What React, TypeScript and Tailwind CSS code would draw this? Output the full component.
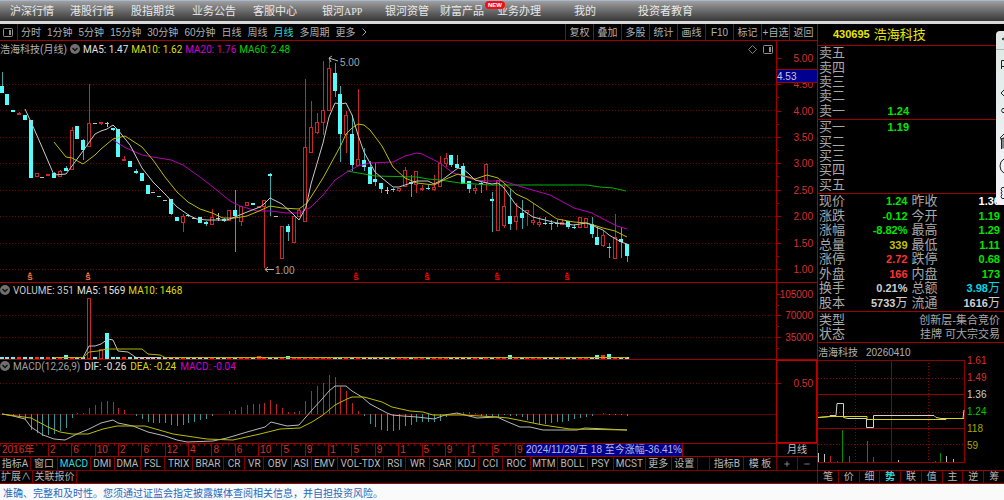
import { Plus, Minus } from "lucide-react";

/* ------------------------------------------------------------------ */
/*  Data                                                               */
/* ------------------------------------------------------------------ */

const CYAN = "#54fcfc";
const RED = "#c82828";
const GRID = "#780000";

const MENU: [string, number][] = [
  ["沪深行情", 60],
  ["港股行情", 61],
  ["股指期货", 61],
  ["业务公告", 61],
  ["客服中心", 69],
  ["银河APP", 63],
  ["银河资管", 55],
  ["财富产品", 57],
  ["业务办理", 77],
  ["我的", 64],
  ["投资者教育", 366],
];

const PERIODS = [
  "分时",
  "1分钟",
  "5分钟",
  "15分钟",
  "30分钟",
  "60分钟",
  "日线",
  "周线",
  "月线",
  "多周期",
  "更多",
];

const TOOLS = ["复权", "叠加", "多股", "统计", "画线", "F10", "标记", "+自选", "返回"];

const INDICATORS: [string, number][] = [
  ["指标A", 31],
  ["窗口", 27],
  ["MACD", 33],
  ["DMI", 24],
  ["DMA", 26],
  ["FSL", 24],
  ["TRIX", 28],
  ["BRAR", 31],
  ["CR", 21],
  ["VR", 19],
  ["OBV", 27],
  ["ASI", 20],
  ["EMV", 26],
  ["VOL-TDX", 47],
  ["RSI", 22],
  ["WR", 23],
  ["SAR", 26],
  ["KDJ", 23],
  ["CCI", 24],
  ["ROC", 28],
  ["MTM", 27],
  ["BOLL", 30],
  ["PSY", 26],
  ["MCST", 32],
  ["更多", 26],
  ["设置", 26],
  ["", 12],
  ["指标B", 34],
  ["模 板", 33],
];

const MONTHS = [2, 6, 10, 2, 6, 12, 4, 8, 6, 10, 5, 9, 1, 5, 9, 1, 5, 9, 1, 5];

// d = falling (filled), u = rising (hollow), w = unchanged
type Kind = "d" | "u" | "w";

// kind, wick top, body top, body bottom, wick bottom
const CANDLES: [Kind, number, number, number, number][] = [
  ["d", 31, 45, 52, 52], ["d", 53, 53, 64, 64], ["d", 69, 69, 71, 71], ["u", 71, 72, 73, 73],
  ["d", 74, 74, 79, 79], ["d", 79, 79, 137, 137], ["u", 132, 132, 135, 135], ["w", 136, 136, 136, 136],
  ["u", 133, 133, 134, 134], ["d", 131, 132, 137, 137], ["u", 129, 130, 135, 136], ["d", 125, 127, 130, 130],
  ["u", 86, 89, 128, 128], ["d", 85, 85, 98, 98], ["d", 98, 99, 109, 119], ["u", 43, 82, 105, 105],
  ["w", 82, 82, 82, 82], ["u", 81, 81, 82, 84], ["w", 81, 82, 82, 86], ["d", 87, 87, 89, 90],
  ["d", 88, 88, 116, 116], ["u", 115, 118, 119, 119], ["d", 120, 120, 126, 126], ["d", 128, 130, 132, 133],
  ["d", 132, 132, 140, 140], ["d", 144, 144, 153, 153], ["w", 151, 151, 151, 151], ["d", 155, 155, 156, 156],
  ["w", 159, 159, 159, 159], ["d", 158, 158, 173, 174], ["d", 176, 176, 180, 180], ["u", 173, 175, 181, 191],
  ["d", 173, 174, 175, 176], ["w", 177, 177, 177, 177], ["d", 176, 176, 182, 182], ["d", 180, 181, 183, 185],
  ["u", 168, 176, 183, 183], ["w", 172, 177, 177, 180], ["d", 177, 178, 180, 181], ["u", 169, 169, 179, 179],
  ["d", 149, 169, 175, 211], ["u", 165, 165, 180, 185], ["u", 161, 161, 164, 165], ["d", 162, 162, 164, 164],
  ["u", 165, 165, 166, 166], ["u", 159, 159, 165, 227], ["d", 132, 133, 135, 175], ["w", 175, 175, 175, 175],
  ["u", 185, 185, 217, 217], ["d", 183, 185, 191, 200], ["u", 175, 175, 201, 201], ["u", 168, 169, 175, 175],
  ["u", 38, 106, 180, 180], ["u", 60, 86, 111, 111], ["u", 72, 81, 91, 93], ["u", 20, 69, 81, 94],
  ["u", 16, 27, 69, 69], ["d", 22, 32, 50, 56], ["d", 45, 53, 93, 121], ["u", 70, 74, 93, 112],
  ["d", 74, 93, 124, 130], ["u", 48, 118, 124, 125], ["d", 107, 119, 126, 130], ["d", 120, 126, 143, 143],
  ["d", 122, 138, 141, 145], ["d", 142, 142, 148, 152], ["w", 146, 149, 149, 153], ["d", 147, 148, 149, 151],
  ["u", 147, 147, 149, 151], ["u", 126, 129, 145, 145], ["d", 134, 141, 143, 156], ["u", 130, 130, 143, 152],
  ["u", 144, 147, 148, 150], ["d", 144, 147, 148, 149], ["u", 134, 146, 148, 150], ["u", 115, 122, 145, 145],
  ["u", 112, 117, 122, 126], ["d", 114, 114, 124, 126], ["d", 114, 123, 127, 127], ["d", 122, 125, 143, 143],
  ["d", 140, 140, 148, 152], ["u", 144, 147, 149, 153], ["d", 141, 142, 143, 152], ["u", 122, 123, 141, 149],
  ["d", 151, 158, 160, 191], ["u", 139, 139, 189, 190], ["u", 143, 165, 184, 187], ["d", 148, 175, 183, 189],
  ["u", 162, 175, 180, 189], ["d", 159, 172, 177, 188], ["u", 169, 169, 171, 185], ["u", 162, 179, 181, 184],
  ["u", 176, 181, 183, 186], ["d", 176, 182, 183, 184], ["d", 179, 182, 183, 189], ["d", 179, 182, 183, 186],
  ["u", 178, 181, 183, 184], ["d", 180, 180, 186, 188], ["d", 183, 186, 187, 188], ["u", 176, 176, 186, 187],
  ["u", 177, 177, 186, 187], ["d", 176, 183, 193, 197], ["d", 186, 196, 204, 204], ["u", 190, 194, 204, 206],
  ["d", 202, 206, 207, 217], ["u", 173, 196, 217, 217], ["d", 186, 198, 201, 217], ["d", 203, 203, 215, 221],
];

const MA_LINES = [
  {
    color: "#00b400",
    points:
      "347,130 364,133 375,135 417,136 428,138 440,139 460,142 490,144 530,144 587,144 600,146 613,147 626,150",
  },
  {
    color: "#b400b4",
    points:
      "113,99 124,106 142,114 153,116 171,119 183,124 200,136 218,150 230,160 240,165 257,170 270,170 287,172 300,172 311,166 323,154 335,139 347,131 358,125 370,122 393,121 405,115 417,112 422,113 440,122 453,132 463,135 475,139 490,140 503,140 522,146 550,154 574,167 592,172 603,178 617,185 627,188",
  },
  {
    color: "#bcbc00",
    points:
      "54,101 66,116 72,117 83,123 95,114 101,108 113,98 125,95 142,106 153,119 165,136 177,151 188,161 200,168 212,172 223,177 235,177 247,175 259,170 270,165 282,167 299,168 307,162 311,156 323,137 335,115 341,104 346,93 352,87 358,83 364,84 370,89 382,105 393,126 405,137 417,142 434,144 446,138 458,133 475,138 487,134 498,137 504,142 516,153 527,158 539,166 557,178 574,181 587,182 603,187 615,190 627,196",
  },
  {
    color: "#c8c8c8",
    points:
      "25,68 31,81 42,106 54,134 66,133 72,125 83,110 95,93 101,90 107,88 113,84 118,89 130,104 142,127 153,141 165,153 177,166 190,175 197,178 207,179 227,179 235,176 247,171 260,166 264,163 270,157 282,163 293,173 299,179 306,166 311,143 323,102 329,76 335,62 341,63 346,62 352,74 358,94 364,111 375,131 382,137 393,146 399,146 417,140 428,140 434,143 442,139 458,127 463,128 469,133 475,139 487,142 492,143 498,142 504,147 516,164 527,172 533,176 557,182 574,184 586,182 592,184 598,187 603,189 609,194 621,201 627,203",
  },
];

// histogram heights, positive above the zero line
const MACD_BARS = [
  0, -1, -2, -3, -5, -16, -19, -22, -21, -20, -17, -14, -4, 1, 1, 6, 9, 12, 13, 12, 6, 4, 0, -2, -5, -8, -9,
  -9, -9, -11, -12, -11, -9, -8, -6, -5, -2, 0, 0, 3, 4, 7, 9, 10, 10, 11, 14, 10, 6, 2, 2, 3, 13, 23, 28,
  31, 39, 37, 27, 23, 11, 3, -2, -10, -13, -16, -17, -17, -16, -12, -11, -8, -8, -8, -8, -7, -3, 0, 1, 2, 2,
  1, -2, -3, -3, -3, -1, -2, -2, -3, -6, -9, -10, -10, -9, -8, -8, -7, -5, -4, -3, -2, 0, 1, -1, -1, -1, -2,
];

const VOLUMES: Record<number, number> = { 11: 4, 15: 60, 17: 9, 18: 26, 44: 3, 49: 3, 87: 4, 102: 4, 103: 4, 104: 5 };

const PRICE_GRID = [43, 69, 96, 122, 149, 175, 202, 228];
const PRICE_LABELS: [string, number][] = [
  ["5.00", 17],
  ["4.50", 43],
  ["4.00", 70],
  ["3.50", 96],
  ["3.00", 122],
  ["2.50", 149],
  ["2.00", 175],
  ["1.50", 202],
  ["1.00", 228],
];

const QUOTES: { label: string; value: string; unit?: string; color: string }[] = [
  { label: "现价", value: "1.24", color: "text-[#00e600]" },
  { label: "昨收", value: "1.36", color: "text-white" },
  { label: "涨跌", value: "-0.12", color: "text-[#00e600]" },
  { label: "今开", value: "1.19", color: "text-[#00e600]" },
  { label: "涨幅", value: "-8.82%", color: "text-[#00e600]" },
  { label: "最高", value: "1.29", color: "text-[#00e600]" },
  { label: "总量", value: "339", color: "text-[#c0c000]" },
  { label: "最低", value: "1.11", color: "text-[#00e600]" },
  { label: "涨停", value: "2.72", color: "text-[#ff3232]" },
  { label: "跌停", value: "0.68", color: "text-[#00e600]" },
  { label: "外盘", value: "166", color: "text-[#ff3232]" },
  { label: "内盘", value: "173", color: "text-[#00e600]" },
  { label: "换手", value: "0.21%", color: "text-[#d0d0d0]" },
  { label: "总额", value: "3.98", unit: "万", color: "text-[#00d8e8]" },
  { label: "股本", value: "5733", unit: "万", color: "text-[#d0d0d0]" },
  { label: "流通", value: "1616", unit: "万", color: "text-[#d0d0d0]" },
];

const candleX = (i: number) => Math.round(1.5 + 5.843 * i);

/* ------------------------------------------------------------------ */
/*  Small pieces                                                       */
/* ------------------------------------------------------------------ */

function PanelIcon() {
  return (
    <svg width="11" height="9" viewBox="0 0 11 9" fill="none" stroke="#909090">
      <rect x="0.5" y="0.5" width="9" height="8" rx="1" />
      <rect x="6" y="2" width="2" height="5" fill="#909090" stroke="none" />
    </svg>
  );
}

function Fold() {
  return (
    <button aria-label="收起" className="shrink-0">
      <svg width="10" height="10" viewBox="0 0 10 10">
        <circle cx="5" cy="5" r="5" fill="#707070" />
        <path d="M2.5 4 5 6.5 7.5 4" fill="none" stroke="#101010" strokeWidth="1.4" />
      </svg>
    </button>
  );
}

function GridLine({ y }: { y: number }) {
  return <line x1="0" x2="100%" y1={y + 0.5} y2={y + 0.5} stroke={GRID} strokeDasharray="1 2" />;
}

function Candle({ kind, x, bar }: { kind: Kind; x: number; bar: [number, number, number, number] }) {
  const [high, top, bottom, low] = bar;
  const height = bottom - top;
  if (kind === "w") {
    return (
      <g stroke="#c0c0c0">
        <line x1={x - 2} x2={x + 2} y1={top + 0.5} y2={top + 0.5} />
        {low > high && <line x1={x + 0.5} x2={x + 0.5} y1={high} y2={low} />}
      </g>
    );
  }
  if (kind === "d") {
    return (
      <g>
        <line x1={x + 0.5} x2={x + 0.5} y1={high} y2={low} stroke="#38a8a8" />
        <rect x={x - 2} y={top} width="4" height={Math.max(height, 1)} fill={CYAN} />
      </g>
    );
  }
  return (
    <g stroke={RED}>
      <line x1={x + 0.5} x2={x + 0.5} y1={high} y2={top} />
      <line x1={x + 0.5} x2={x + 0.5} y1={bottom} y2={low} />
      <rect x={x - 1.5} y={top + 0.5} width="3" height={Math.max(height, 1)} fill="#000000" />
    </g>
  );
}

function Dividend({ x, color }: { x: number; color: string }) {
  return (
    <g fill={color}>
      <path d={`M${x} 231l2 2.500h-4z`} />
      <text x={x} y="239" fontSize="8" fontWeight="700" textAnchor="middle">
        S
      </text>
    </g>
  );
}

/* ------------------------------------------------------------------ */
/*  Charts                                                             */
/* ------------------------------------------------------------------ */

function PriceChart() {
  return (
    <div className="flex h-[242px] border-b border-[#a00000]">
      <div className="relative min-w-0 flex-1">
        <svg className="block h-full w-full">
          {PRICE_GRID.map((y) => (
            <GridLine key={y} y={y} />
          ))}
          {CANDLES.map(([kind, ...bar], i) => (
            <Candle key={i} kind={kind} x={candleX(i)} bar={bar} />
          ))}
          {MA_LINES.map((line) => (
            <polyline key={line.color} points={line.points} fill="none" stroke={line.color} />
          ))}
          <g fill="none" stroke="#b0b0b0">
            <path d="M338 20 329 17M332 15l-3 2 2 4" />
            <path d="M274 228.500h-9M268 226l-3 2.500 3 2.500" />
          </g>
          <g fill="#a8a8a8" fontSize="10">
            <text x="340" y="25">5.00</text>
            <text x="275" y="233">1.00</text>
          </g>
          <Dividend x={30} color="#ff7840" />
          <Dividend x={88} color="#ff7840" />
          {[356, 427, 497, 567].map((x) => (
            <Dividend key={x} x={x} color="#ff0000" />
          ))}
        </svg>
        <div className="absolute inset-x-0 top-0 flex h-4 items-center gap-[3px] font-['Roboto','Noto_Sans_CJK_SC',sans-serif] text-[10px] whitespace-nowrap">
          <span className="text-[#b0b0b0]">浩海科技(月线)</span>
          <Fold />
          <span className="text-[#e0e0e0]">MA5: 1.47</span>
          <span className="text-[#dcdc00]">MA10: 1.62</span>
          <span className="text-[#d000d0]">MA20: 1.76</span>
          <span className="text-[#00d000]">MA60: 2.48</span>
          <span className="ml-auto flex items-center gap-1.5 pr-0.5">
            <svg width="9" height="9" viewBox="0 0 9 9" fill="none" stroke="#808080">
              <path d="M4.500 0.500 8.500 4.500 4.500 8.500 0.500 4.500z" />
            </svg>
            <PanelIcon />
          </span>
        </div>
      </div>
      <div className="relative w-[41px] border-l border-[#a00000]">
        <svg className="block h-full w-full" fontSize="10">
          {PRICE_LABELS.map(([label, y]) => (
            <g key={label}>
              <line x1="0" x2="4" y1={y + 0.5} y2={y + 0.5} stroke="#a00000" />
              <line x1="0" x2="2" y1={y + 13.5} y2={y + 13.5} stroke="#a00000" />
              <text x="36" y={y + 4} textAnchor="end" fill="#d83030">
                {label}
              </text>
            </g>
          ))}
        </svg>
        <div className="absolute inset-x-0 top-7 flex h-3.5 items-center border-y border-[#a00000] bg-[#000090] text-[10px] text-[#c8c8d8]">
          4.53
        </div>
      </div>
    </div>
  );
}

function VolumeChart() {
  return (
    <div className="flex h-[77px] border-b border-[#a00000]">
      <div className="relative min-w-0 flex-1">
        <svg className="block h-full w-full">
          <GridLine y={32} />
          <GridLine y={54} />
          {CANDLES.map(([kind], i) => {
            const h = VOLUMES[i] ?? 2;
            const x = candleX(i);
            if (i === 15 || i === 17) {
              return <rect key={i} x={x - 1.5} y={75.5 - h} width="3" height={h} fill="#000000" stroke={RED} />;
            }
            return <rect key={i} x={x - 2} y={76 - h} width="4" height={h} fill={kind === "u" ? "#f03020" : CYAN} />;
          })}
          <polyline
            points="83,74.500 89,63 95,63 101,61 108,56 113,57 118,68 128,69 136,74.500 160,74.500"
            fill="none"
            stroke="#c0c0c0"
          />
          <polyline
            points="54,74.500 83,74.500 89,69 98,68 107,66 142,66 148,71 160,72 165,74.500 627,74.500"
            fill="none"
            stroke="#b4b400"
          />
        </svg>
        <div className="absolute inset-x-0 top-0 flex h-3.5 items-center gap-[3px] font-['Roboto',sans-serif] text-[10px] whitespace-nowrap">
          <Fold />
          <span className="text-[#c8c8c8]">VOLUME: 351</span>
          <span className="text-[#e0e0e0]">MA5: 1569</span>
          <span className="text-[#dcdc00]">MA10: 1468</span>
        </div>
      </div>
      <div className="w-[41px] border-l border-[#a00000]">
        <svg className="block h-full w-full" fontSize="10">
          {[
            ["105000", 11],
            ["70000", 32],
            ["35000", 54],
          ].map(([label, y]) => (
            <g key={label}>
              <line x1="0" x2="4" y1={Number(y) + 0.5} y2={Number(y) + 0.5} stroke="#a00000" />
              <line x1="0" x2="2" y1={Number(y) + 11.5} y2={Number(y) + 11.5} stroke="#a00000" />
              <text x="36" y={Number(y) + 4} textAnchor="end" fill="#d83030">
                {label}
              </text>
            </g>
          ))}
        </svg>
      </div>
    </div>
  );
}

function MacdChart() {
  return (
    <div className="flex h-[84px] border-b border-[#a00000]">
      <div className="relative min-w-0 flex-1">
        <svg className="block h-full w-full">
          <GridLine y={23} />
          <line x1="0" x2="100%" y1="54.5" y2="54.5" stroke="#600000" />
          {MACD_BARS.map((v, i) => (
            <line
              key={i}
              x1={candleX(i) + 0.5}
              x2={candleX(i) + 0.5}
              y1="54"
              y2={54 - v}
              stroke={v > 0 ? "#c02424" : "#389898"}
            />
          ))}
          <polyline
            points="2,54 13,56 25,59 31,67 43,75 54,79 65,80 77,74 89,69 101,63 113,60 118,63 133,66 148,72 165,76 177,80 187,82 213,81 227,78 247,72 265,67 271,62 287,66 299,65 312,50 323,38 329,31 335,26 346,26 352,31 362,37 370,44 387,53 392,55 403,56 417,57 434,59 445,55 457,53 477,58 497,57 508,62 520,67 530,67 543,70 577,70 585,68 627,70"
            fill="none"
            stroke="#b8b8b8"
          />
          <polyline
            points="2,54 31,58 48,67 60,72 72,74 88,74 103,69 117,66 145,66 173,74 207,79 233,80 260,74 280,69 300,68 312,62 323,55 335,45 347,39 352,37 364,37 382,42 392,47 410,51 423,52 433,55 463,55 497,57 508,58 543,65 570,69 627,70"
            fill="none"
            stroke="#bcbc00"
          />
        </svg>
        <div className="absolute inset-x-0 top-0 flex h-3 items-center gap-[3px] font-['Roboto',sans-serif] text-[10px] whitespace-nowrap">
          <Fold />
          <span className="text-[#a0a0a0]">MACD(12,26,9)</span>
          <span className="pl-px text-[#e0e0e0]">DIF: -0.26</span>
          <span className="pl-px text-[#dcdc00]">DEA: -0.24</span>
          <span className="pl-px text-[#d000d0]">MACD: -0.04</span>
        </div>
      </div>
      <div className="w-[41px] border border-[#c00000]">
        <svg className="block h-full w-full" fontSize="10">
          <line x1="0" x2="4" y1="22.5" y2="22.5" stroke="#a00000" />
          <text x="36" y="26" textAnchor="end" fill="#d83030">
            0.50
          </text>
        </svg>
      </div>
    </div>
  );
}

function TimeAxis() {
  return (
    <div className="flex h-[13px] border-b border-[#a00000] text-[10px] leading-3 whitespace-nowrap text-[#d83030]">
      <div className="relative flex min-w-0 flex-1">
        <div className="absolute top-0 left-0 h-0.5 w-[524px] bg-[repeating-linear-gradient(to_right,#800000_0_1px,transparent_1px_6px)]" />
        <span className="w-12 pl-0.5">2016年</span>
        <div className="flex w-[467px]">
          {MONTHS.map((m, i) => (
            <span key={i} className="flex-1 border-l border-[#a00000] pl-px">
              {m}
            </span>
          ))}
        </div>
        <span className="w-[11px] border-l border-[#a00000] pl-px">9</span>
        <span className="border-r border-[#a00000] bg-[#000090] text-[#b8b8d8]">
          2024/11/29/五 18 至今涨幅-36.41%
        </span>
      </div>
      <button className="w-[41px] border-l border-[#a00000] text-[#c0c0c0]">月线</button>
    </div>
  );
}

function IndicatorTabs() {
  return (
    <div className="flex h-3.5 border-b border-[#800000] font-['Roboto','Noto_Sans_CJK_SC',sans-serif] text-[10px] leading-3 whitespace-nowrap text-[#b8b8b8]">
      <div className="flex min-w-0 flex-1">
        {INDICATORS.map(([name, grow], i) =>
          name === "" ? (
            <span key={i} className="min-w-0 basis-0 border-l border-[#800000]" style={{ flexGrow: grow }} />
          ) : (
            <button
              key={i}
              className={`flex min-w-0 basis-0 items-center justify-center ${i > 0 ? "border-l border-[#800000]" : ""} ${
                name === "MACD" ? "text-[#30d8d8]" : ""
              }`}
              style={{ flexGrow: grow }}
            >
              {name}
            </button>
          )
        )}
      </div>
      <div className="flex w-[41px]">
        <button aria-label="放大" className="flex flex-1 items-center justify-center border-l border-[#800000]">
          <Plus size={8} />
        </button>
        <button aria-label="缩小" className="flex flex-1 items-center justify-center border-l border-[#800000]">
          <Minus size={8} />
        </button>
      </div>
    </div>
  );
}

/* ------------------------------------------------------------------ */
/*  Quote panel                                                        */
/* ------------------------------------------------------------------ */

function OrderRows({ side, prices }: { side: string; prices: [string, string][] }) {
  return (
    <div className="flex h-[74px] flex-col border-b border-[#a00000] pb-px">
      {prices.map(([level, price]) => (
        <div key={level} className="flex min-h-0 flex-1 items-center pl-px">
          <span className="text-[13px] leading-3.5 text-[#a8a8a8]">{side + level}</span>
          <span className="w-16 text-right text-[11px] font-bold text-[#00e600]">{price}</span>
        </div>
      ))}
    </div>
  );
}

function MiniChart() {
  return (
    <div className="flex h-[103px]">
      <svg className="block h-full w-[147px]" fill="none">
        <g stroke="#900000">
          <path d="M0 .5h147M0 34.500h147M0 68.500h147M0 102.500h147M146.500 0v103" />
          <path d="M73.500 0v103" />
          <path d="M0 18.500h147M0 52.500h147M0 84.500h147M37.500 0v103M110.500 0v103" strokeDasharray="1 2" />
        </g>
        <path d="M24.500 70v32M31.500 96v6M49.500 81v21M117.500 101v1M122.500 93v9" stroke="#009000" />
        <path d="M.5 93v9M6.500 94v8M80.500 100v2M128.500 96v6M135.500 99v3" stroke="#c0c0c0" />
        <path d="M12.500 96v6M19.500 101v1M55.500 97v5" stroke="#c02020" />
        <path
          d="M0 57.500 12 56.500 12 55.500H18L19 43.500H25.500V57.500L30 58.500H48.500V67.500H55.500V55.500H116L118 57.500 123 58.500H145L146 50"
          stroke="#d0d0d0"
        />
        <path d="M0 57.500 12 56.500H49V59.500H128V58.500H146" stroke="#d8d800" />
      </svg>
      <div className="relative flex-1 text-[10px] leading-3">
        <svg className="absolute inset-x-0 -top-1.5 h-[120px] w-full" fontSize="10">
          <text x="2" y="10" fill="#d83030">1.61</text>
          <text x="2" y="27" fill="#d83030">1.49</text>
          <text x="2" y="44" fill="#d0d0d0">1.36</text>
          <text x="2" y="61" fill="#00c800">1.24</text>
          <text x="2" y="78" fill="#a8a800">118</text>
          <text x="2" y="95" fill="#a8a800">59</text>
        </svg>
      </div>
    </div>
  );
}

function QuotePanel() {
  return (
    <aside className="w-[187px] shrink-0 border-l border-[#a00000]">
      <h1 className="flex h-[22px] items-center gap-1 border-b border-[#a00000] pl-[15px] text-[#e6e600]">
        <span className="text-[11px] font-bold">430695</span>
        <span className="text-[13px]">浩海科技</span>
      </h1>
      <OrderRows
        side="卖"
        prices={[
          ["五", ""],
          ["四", ""],
          ["三", ""],
          ["二", ""],
          ["一", "1.24"],
        ]}
      />
      <OrderRows
        side="买"
        prices={[
          ["一", "1.19"],
          ["二", ""],
          ["三", ""],
          ["四", ""],
          ["五", ""],
        ]}
      />
      <dl className="grid h-[118px] grid-cols-2 grid-rows-8 gap-x-1 border-b border-[#a00000] pr-1 pb-px pl-px">
        {QUOTES.map((q) => (
          <div key={q.label} className="flex min-h-0 items-center justify-between">
            <dt className="text-[13px] leading-3.5 text-[#a8a8a8]">{q.label}</dt>
            <dd className={`text-[11px] leading-3.5 font-bold ${q.color}`}>
              {q.value}
              {q.unit && <span className="text-[12px] font-normal">{q.unit}</span>}
            </dd>
          </div>
        ))}
      </dl>
      <dl className="flex h-[31px] flex-col justify-evenly border-b border-[#a00000] pr-1 pl-px leading-3.5 text-[#a8a8a8]">
        <div className="flex items-center justify-between">
          <dt className="text-[13px]">类型</dt>
          <dd className="text-[11px]">创新层-集合竞价</dd>
        </div>
        <div className="flex items-center justify-between">
          <dt className="text-[13px]">状态</dt>
          <dd className="text-[11px]">挂牌 可大宗交易</dd>
        </div>
      </dl>
      <div className="flex h-[17px] items-center gap-2 pt-0.5 text-[10px] text-[#b0b0b0]">
        <span>浩海科技</span>
        <span>20260410</span>
      </div>
      <MiniChart />
      <div className="h-[7px]" />
      <div className="flex h-3.5 border-y border-[#a00000] text-[10px] leading-3 text-[#b8b8b8]">
        {["笔", "价", "细", "势", "联", "值", "主", "逆", "筹"].map((t, i) => (
          <button
            key={t}
            className={`flex-1 ${i > 0 ? "border-l border-[#800000]" : ""} ${t === "势" ? "font-bold text-[#30d8d8]" : ""}`}
          >
            {t}
          </button>
        ))}
      </div>
    </aside>
  );
}

// floating tool strip, mostly off the right edge
function SideDock() {
  return (
    <div className="absolute top-[31px] right-0 h-[174px] w-2 overflow-hidden rounded-l-sm bg-linear-to-b from-[#dfe8e5] to-[#f4f4f8]">
      <svg width="8" height="174" viewBox="0 0 8 174" fill="none" stroke="#202020">
        <path d="M0 18.500h8" stroke="#b0b8b8" />
        <path d="M8 7 6 8l2 1" />
        <path d="M8 29.500H5.500v6H8M5.500 35v3" />
        <path d="M8 59 5 62l3 3M8 77.500H6.500q-2 2 0 4H8" />
        <path d="M4 107l4-4M5.500 108v10M8 107.500H7v10M4 108l4-1" />
        <path d="M8 128q-4 2-4 7t4 7" />
        <path d="M8 156.500H6q-2 2 0 4-2 1.500 0 3-2 2 0 4h2" />
      </svg>
    </div>
  );
}

/* ------------------------------------------------------------------ */
/*  Page                                                               */
/* ------------------------------------------------------------------ */

export default function App() {
  return (
    <div className="relative overflow-hidden bg-black font-['Liberation_Sans','Noto_Sans_CJK_SC',sans-serif]">
      <nav className="flex h-6 items-center border-t border-b-3 border-t-[#a8b8d0] border-b-[#d8d8d8] bg-linear-to-b from-[#a0a0a0] to-[#383838] pl-2.5 text-[11px] whitespace-nowrap text-[#e8e8e8]">
        {MENU.map(([label, grow]) => (
          <a key={label} href="#" className="relative min-w-0 basis-0" style={{ flexGrow: grow }}>
            {label === "银河APP" ? (
              <>
                银河<span className="font-['Liberation_Serif'] text-[10px]">APP</span>
              </>
            ) : (
              label
            )}
            {label === "财富产品" && (
              <span className="absolute -top-0.5 left-[45px] z-10 h-2 rounded-full bg-[#f01010] px-[3px] text-[6px] leading-2 font-bold text-white">
                NEW
              </span>
            )}
          </a>
        ))}
      </nav>

      <main className="flex">
        <section className="min-w-0 flex-1">
          <div className="flex h-[17px] border-b border-[#a00000] text-[10px] whitespace-nowrap text-[#b0b0b0]">
            <button aria-label="侧栏" className="flex w-[18px] items-center justify-center border-r border-[#a00000]">
              <PanelIcon />
            </button>
            <div className="flex flex-1 items-center gap-1.5 pl-[3px]">
              {PERIODS.map((p) => (
                <button key={p} className={p === "月线" ? "text-[#30d8d8]" : ""}>
                  {p}
                </button>
              ))}
              <svg width="5" height="8" viewBox="0 0 5 8" fill="none" stroke="#a0a0a0">
                <path d="M.5.5 4 4 .5 7.500" />
              </svg>
            </div>
            {TOOLS.map((t) => (
              <button key={t} className="w-7 border-l border-[#a00000]">
                {t}
              </button>
            ))}
          </div>
          <PriceChart />
          <VolumeChart />
          <MacdChart />
          <TimeAxis />
          <IndicatorTabs />
          <div className="flex h-[13px] border-b border-[#a00000] text-[10px] leading-3 text-[#b0b0b0]">
            <button className="w-8 text-center">扩展∧</button>
            <button className="w-[45px] border-x border-[#800000]">关联报价</button>
          </div>
        </section>
        <QuotePanel />
      </main>

      <footer className="h-4 bg-[#fafafa] pt-1 pl-[3px] text-[10px] leading-3 whitespace-nowrap text-[#2868c0]">
        准确、完整和及时性。您须通过证监会指定披露媒体查阅相关信息，并自担投资风险。
      </footer>
      <SideDock />
    </div>
  );
}
